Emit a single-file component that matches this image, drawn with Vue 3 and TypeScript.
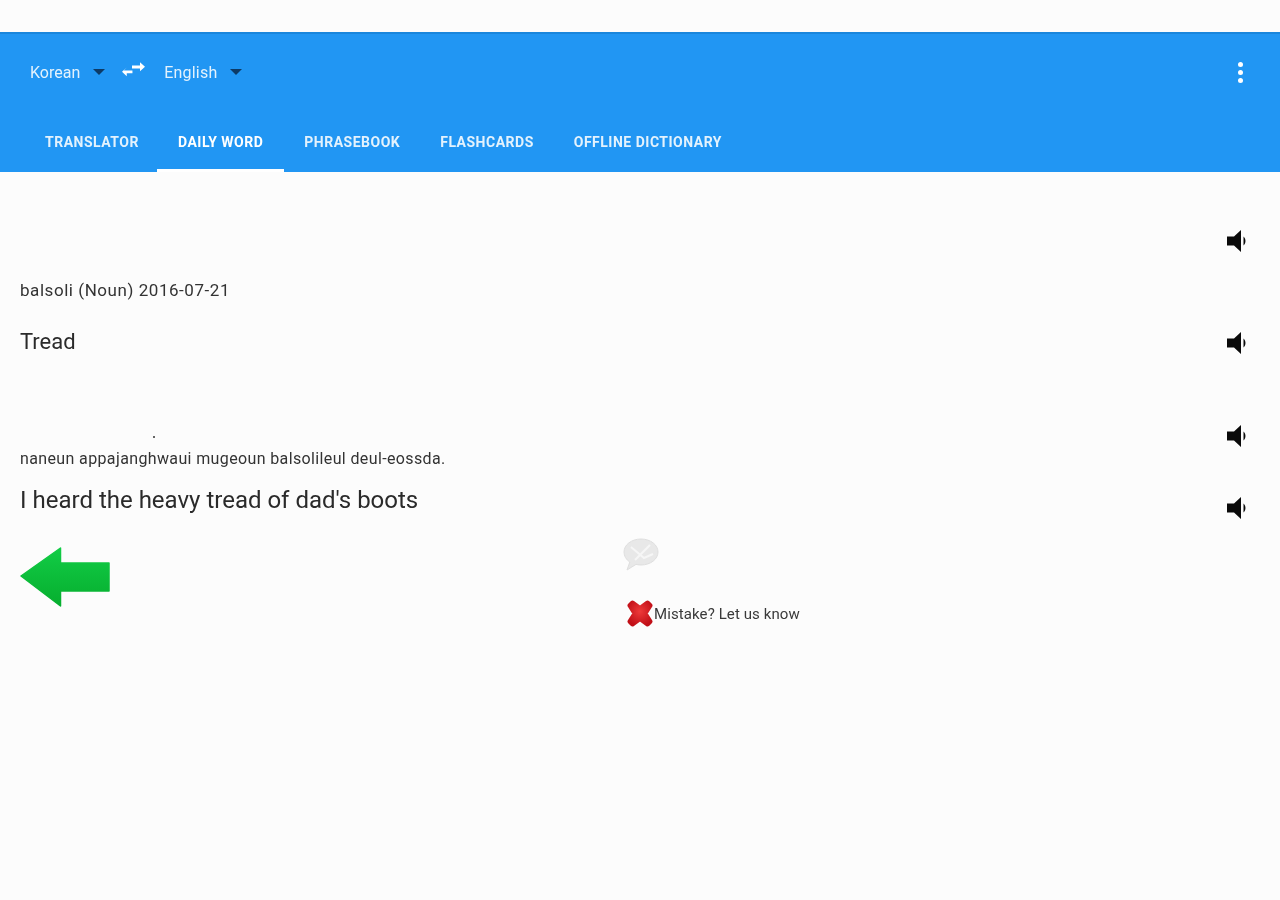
<script setup lang="ts">
const tabs: string[] = ['Translator', 'Daily Word', 'Phrasebook', 'Flashcards', 'Offline Dictionary']
const activeTab = 'Daily Word'
</script>

<template>
  <div class="page">
    <div class="strip"></div>
    <header class="bar">
      <div class="toolbar">
        <div class="lang lang-from">
          <span>Korean</span>
          <i class="caret"></i>
        </div>
        <svg class="swap" viewBox="0 0 24 18" width="24" height="18">
          <path d="M2 11.5h9v3H5v3.2L0 13l5-4.700z" transform="translate(1 -1.500) scale(.95)" fill="#fff" />
          <path d="M22 5.500h-11v3h8v2.800l5-4.600-5-4.500v3.300z" transform="translate(0 -1)" fill="#fff" />
        </svg>
        <div class="lang lang-to">
          <span>English</span>
          <i class="caret"></i>
        </div>
        <div class="more" aria-label="More">
          <i></i><i></i><i></i>
        </div>
      </div>
      <nav class="tabs">
        <div v-for="t in tabs" :key="t" class="tab" :class="{ active: t === activeTab }">{{ t }}</div>
      </nav>
    </header>

    <main class="content">
      <div class="row speak-only first">
        <svg class="spk" viewBox="0 0 24 24" width="24" height="24"><path d="M1 7.500h7L15 1v22l-7-6.500H1z" /><path d="M17.500 7.500c2.600 2.400 2.600 6.600 0 9z" /></svg>
      </div>
      <p class="meta">balsoli (Noun) 2016-07-21</p>
      <div class="row word-row">
        <span class="big">Tread</span>
        <svg class="spk" viewBox="0 0 24 24" width="24" height="24"><path d="M1 7.500h7L15 1v22l-7-6.500H1z" /><path d="M17.500 7.500c2.600 2.400 2.600 6.600 0 9z" /></svg>
      </div>
      <div class="row speak-only second">
        <i class="dot"></i>
        <svg class="spk" viewBox="0 0 24 24" width="24" height="24"><path d="M1 7.500h7L15 1v22l-7-6.500H1z" /><path d="M17.500 7.500c2.600 2.400 2.600 6.600 0 9z" /></svg>
      </div>
      <p class="sentence">naneun appajanghwaui mugeoun balsolileul deul-eossda.</p>
      <div class="row example-row">
        <span class="big example">I heard the heavy tread of dad's boots</span>
        <svg class="spk" viewBox="0 0 24 24" width="24" height="24"><path d="M1 7.500h7L15 1v22l-7-6.500H1z" /><path d="M17.500 7.500c2.600 2.400 2.600 6.600 0 9z" /></svg>
      </div>

      <section class="actions">
        <svg class="arrow" viewBox="0 0 90 60" width="90" height="60">
          <defs>
            <linearGradient id="green" x1="0" y1="0" x2="0" y2="1">
              <stop offset="0" stop-color="#12cc46" />
              <stop offset="1" stop-color="#06ae2e" />
            </linearGradient>
          </defs>
          <path d="M1 29 40.500 1v15H89v28H40.500v15z" fill="url(#green)" stroke="url(#green)" stroke-width="1.500" stroke-linejoin="round" />
        </svg>
        <div class="feedback">
          <svg class="bubble" viewBox="0 0 36 33" width="36" height="33">
            <path d="M18 1c9.500 0 17 5.800 17 13s-7.500 13-17 13c-1.800 0-3.500-.2-5-.6L4 32l2.800-8C3 21.600 1 18 1 14 1 6.800 8.500 1 18 1z" fill="#e8e8e8" stroke="#dedede" />
            <path d="M8 9l13 11 9-4M27 7 12 22" stroke="#f6f6f6" stroke-width="2" fill="none" />
          </svg>
          <div class="mistake">
            <svg class="cross" viewBox="0 0 26 27" width="26" height="27">
              <defs>
                <radialGradient id="red" cx=".5" cy=".4" r=".7">
                  <stop offset="0" stop-color="#ee3a3a" />
                  <stop offset="1" stop-color="#c10f17" />
                </radialGradient>
              </defs>
              <path d="M3 5.500 5.500 3 13 8.500 20.500 3 23 5.500l-5 8 5 8-2.500 2.500-7.500-5.500L5.500 24 3 21.500l5-8z" fill="url(#red)" stroke="url(#red)" stroke-width="5" stroke-linejoin="round" />
            </svg>
            <span>Mistake? Let us know</span>
          </div>
        </div>
      </section>
    </main>
  </div>
</template>

<style>
html,
body {
  background: #fcfcfc;
}
</style>

<style scoped>
.page {
  min-height: 900px;
  background: #fcfcfc;
  font-family: Roboto, "Liberation Sans", sans-serif;
  color: #212121;
  overflow: hidden;
}
.strip {
  height: 32px;
}
.bar {
  height: 140px;
  background: #2196f3;
  box-shadow: inset 0 2px 0 #1a86dc;
  color: #fff;
}
.toolbar {
  height: 80px;
  display: flex;
  align-items: center;
  padding: 0 30px;
  filter: blur(0.4px);
}
.lang {
  display: flex;
  align-items: center;
  font-size: 16px;
  color: #e3f2fd;
}
.lang-from {
  margin-right: 17px;
}
.lang-to span {
  letter-spacing: 0.2px;
}
.swap {
  margin-right: 19px;
  margin-top: -4px;
  margin-left: -1px;
}
.caret {
  width: 0;
  height: 0;
  margin-left: 13px;
  border-left: 6px solid transparent;
  border-right: 6px solid transparent;
  border-top: 6px solid #0d3a66;
}
.more {
  margin-left: auto;
  margin-right: 7px;
  display: flex;
  flex-direction: column;
  gap: 3px;
}
.more i {
  width: 5px;
  height: 5px;
  border-radius: 50%;
  background: #fff;
}
.tabs {
  height: 60px;
  display: flex;
  padding-left: 25px;
  filter: blur(0.4px);
}
.tab {
  height: 60px;
  box-sizing: border-box;
  padding: 2px 20px 0;
  display: flex;
  align-items: center;
  font-size: 14px;
  font-weight: 700;
  letter-spacing: 0.5px;
  text-transform: uppercase;
  color: #e3f2fd;
  border-bottom: 3px solid transparent;
}
.tab.active {
  border-bottom-color: #fff;
  color: #fff;
  margin-left: -2px;
  padding: 2px 21px 0;
}
.content {
  padding: 0 30px 0 20px;
  filter: blur(0.4px);
}
.row {
  display: flex;
  align-items: center;
  justify-content: space-between;
}
.speak-only {
  justify-content: flex-end;
  position: relative;
}
.first {
  height: 48px;
  margin-top: 45px;
}
.meta {
  margin: 15px 0 0;
  height: 20px;
  line-height: 20px;
  font-size: 17px;
  letter-spacing: 0.55px;
  color: #333;
}
.word-row {
  margin-top: 19px;
  height: 48px;
}
.big {
  font-size: 22px;
  color: #2a2a2a;
}
.word-row .big {
  margin-top: -4px;
}
.second {
  margin-top: 45px;
  height: 48px;
}
.dot {
  position: absolute;
  left: 133px;
  top: 24px;
  width: 2px;
  height: 2px;
  background: #333;
  border-radius: 50%;
}
.sentence {
  margin: -11px 0 0;
  height: 20px;
  line-height: 20px;
  font-size: 16px;
  letter-spacing: 0.37px;
  color: #333;
}
.example-row {
  margin-top: 15px;
  height: 48px;
}
.example {
  font-size: 24px;
  margin-top: -16px;
}
.spk {
  fill: #0a0a0a;
}
.actions {
  display: flex;
  align-items: flex-start;
  margin-top: 15px;
}
.feedback {
  margin-left: 513px;
  margin-top: -9px;
}
.bubble {
  display: block;
}
.mistake {
  display: flex;
  align-items: center;
  margin-top: 29px;
  margin-left: 4px;
  font-size: 15px;
  letter-spacing: 0.1px;
  color: #3a3a3a;
}
.cross {
  flex: none;
  margin-right: 1px;
}
</style>
